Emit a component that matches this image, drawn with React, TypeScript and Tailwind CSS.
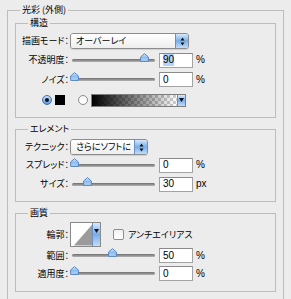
import type { ReactNode } from "react";

const jp = "font-['Noto_Sans_CJK_JP','Noto_Sans',sans-serif] [font-feature-settings:'palt']";
const num = "font-['Liberation_Sans',Arial,sans-serif] text-[10px]";

const Label = ({ children }: { children: ReactNode }) => (
  <span className="w-[53px] shrink-0 text-right leading-[12px]">{children}</span>
);

const Thumb = ({ left }: { left: number }) => (
  <svg
    className="absolute top-[-6px]"
    style={{ left: left - 4.5 }}
    width="9"
    height="9"
    viewBox="0 0 9 9"
  >
    <defs>
      <linearGradient id="thumbFill" x1="0" y1="0" x2="0" y2="1">
        <stop offset="0" stopColor="#d5e8fb" />
        <stop offset="0.5" stopColor="#8ebcee" />
        <stop offset="1" stopColor="#b9d7f6" />
      </linearGradient>
    </defs>
    <path d="M4.5 0.6 L8.4 4 L8.4 8.4 L0.6 8.4 L0.6 4 Z" fill="url(#thumbFill)" stroke="#4d7fbf" strokeWidth="0.9" />
  </svg>
);

const Slider = ({ pos }: { pos: number }) => (
  <div className="relative ml-[3px] h-[3px] w-[83px] shrink-0">
    <div className="h-[3px] w-full rounded-full bg-gradient-to-b from-[#6f6f6f] to-[#b4b4b4]" />
    <Thumb left={pos} />
  </div>
);

const Field = ({ value, unit, selected }: { value: string; unit: string; selected?: boolean }) => (
  <>
    <div className={`ml-[4px] flex h-[15px] w-[34px] shrink-0 items-center border border-[#a3a3a3] border-t-[#8a8a8a] bg-white pl-[3px] ${num}`}>
      <span className={selected ? "bg-[#b3d3fb] leading-[12px]" : "leading-[12px]"}>{value}</span>
    </div>
    <span className={`ml-[3px] ${num} leading-[12px]`}>{unit}</span>
  </>
);

const SliderRow = ({
  label,
  pos,
  value,
  unit,
  selected,
  className,
}: {
  label: string;
  pos: number;
  value: string;
  unit: string;
  selected?: boolean;
  className: string;
}) => (
  <div className={`flex items-center ${className}`}>
    <Label>{label}</Label>
    <Slider pos={pos} />
    <Field value={value} unit={unit} selected={selected} />
  </div>
);

const DoubleArrow = () => (
  <svg width="5" height="9" viewBox="0 0 5 9">
    <path d="M2.5 0.5 L4.5 3.5 L0.5 3.5 Z" fill="#111" />
    <path d="M2.5 8.5 L4.5 5.5 L0.5 5.5 Z" fill="#111" />
  </svg>
);

const DownArrow = () => (
  <svg width="5" height="4" viewBox="0 0 5 4">
    <path d="M0 0 L5 0 L2.5 4 Z" fill="#111" />
  </svg>
);

const Aqua = "bg-gradient-to-b from-[#d6e9fc] via-[#76aeea] to-[#c4ddf8]";

const Popup = ({ text, width }: { text: string; width: string }) => (
  <div className={`ml-[1px] flex h-[16px] ${width} shrink-0 overflow-hidden rounded-[3px] border border-[#8c8c8c] shadow-[0_1px_1px_rgba(0,0,0,0.12)]`}>
    <span className="flex-1 whitespace-nowrap bg-gradient-to-b from-white to-[#eeeeee] pl-[5px] leading-[14px]">{text}</span>
    <span className={`flex w-[13px] shrink-0 items-center justify-center border-l border-[#6a8fc4] ${Aqua}`}>
      <DoubleArrow />
    </span>
  </div>
);

// group box: title sits in the top line, body carries side/bottom borders
const Group = ({
  title,
  className,
  bodyClass,
  children,
}: {
  title: string;
  className?: string;
  bodyClass: string;
  children: ReactNode;
}) => (
  <div className={className}>
    <div className="grid h-[12px] grid-cols-[13px_auto_1fr]">
      <div className="pt-[6px]">
        <div className="h-full border-l border-t border-[#bcbcbc]" />
      </div>
      <div className="whitespace-nowrap px-[2px] leading-[12px]">{title}</div>
      <div className="pt-[6px]">
        <div className="h-full border-r border-t border-[#bcbcbc]" />
      </div>
    </div>
    <div className={`border-x border-[#bcbcbc] ${bodyClass}`}>{children}</div>
  </div>
);

export default function App() {
  return (
    <div className={`h-[299px] w-[291px] overflow-hidden bg-[#ececec] pl-[7px] pr-[7px] pt-[4px] text-[9px] text-black ${jp}`}>
      <Group title="光彩 (外側)" bodyClass="px-[7px] pb-[30px] pt-[1px]">
        <Group title="構造" bodyClass="border-b pb-[6px] pt-[3px]">
          <div className="flex h-[18px] items-center">
            <Label>描画モード：</Label>
            <Popup text="オーバーレイ" width="w-[119px]" />
          </div>
          <SliderRow className="h-[20px]" label="不透明度：" pos={72} value="90" unit="%" selected />
          <SliderRow className="h-[19px]" label="ノイズ：" pos={2} value="0" unit="%" />
          <div className="flex h-[22px] items-center">
            <span className="ml-[26px] flex h-[10px] w-[10px] shrink-0 items-center justify-center rounded-full border border-[#3f70b3] bg-gradient-to-b from-[#c9e0fa] to-[#5d98df]">
              <span className="h-[4px] w-[4px] rounded-full bg-[#111]" />
            </span>
            <span className="ml-[3px] h-[10px] w-[10px] shrink-0 bg-black" />
            <span className="ml-[13px] h-[10px] w-[10px] shrink-0 rounded-full border border-[#8d8d8d] bg-gradient-to-b from-[#f4f4f4] to-white" />
            <div className="ml-[3px] flex h-[13px] w-[95px] shrink-0 border border-[#7d7d7d]">
              <div className="flex-1 bg-[image:repeating-conic-gradient(#cfcfcf_0_25%,#ffffff_0_50%)] bg-[length:6px_6px]">
                <div className="h-full w-full bg-gradient-to-r from-black to-transparent" />
              </div>
              <span className={`flex w-[8px] items-center justify-center border-l border-[#6a8fc4] ${Aqua}`}>
                <DownArrow />
              </span>
            </div>
          </div>
        </Group>

        <Group title="エレメント" className="mt-[5px]" bodyClass="border-b pb-[7px] pt-[3px]">
          <div className="flex h-[18px] items-center">
            <Label>テクニック：</Label>
            <Popup text="さらにソフトに" width="w-[78px]" />
          </div>
          <SliderRow className="h-[18px]" label="スプレッド：" pos={2} value="0" unit="%" />
          <SliderRow className="h-[20px]" label="サイズ：" pos={15} value="30" unit="px" />
        </Group>

        <Group title="画質" className="mt-[5px]" bodyClass="border-b pb-[8px] pt-[3px]">
          <div className="flex h-[25px] items-center">
            <Label>輪郭：</Label>
            <div className="ml-[1px] flex h-[25px] w-[31px] shrink-0 border border-[#8a8a8a]">
              <svg width="22" height="23" viewBox="0 0 22 23" className="bg-white">
                <path d="M3 23 L22 1 L22 23 Z" fill="#9b9b9b" />
              </svg>
              <span className={`flex w-[8px] items-start justify-center border-l border-[#6a8fc4] pt-[6px] ${Aqua}`}>
                <DownArrow />
              </span>
            </div>
            <span className="ml-[12px] h-[11px] w-[11px] shrink-0 rounded-[2px] border border-[#8d8d8d] bg-gradient-to-b from-[#f2f2f2] to-white" />
            <span className="ml-[4px] leading-[12px]">アンチエイリアス</span>
          </div>
          <SliderRow className="h-[17px]" label="範囲：" pos={40} value="50" unit="%" />
          <SliderRow className="h-[19px]" label="適用度：" pos={2} value="0" unit="%" />
        </Group>
      </Group>
    </div>
  );
}
